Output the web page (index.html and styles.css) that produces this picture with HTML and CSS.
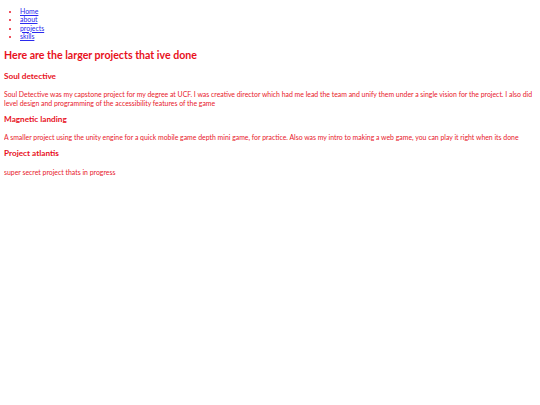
FILE: index.html
```html
<!DOCTYPE html>
<html>
<head>
<meta charset="utf-8">
<link rel="stylesheet" href="styles.css">
</head>
<body>
<ul class="nav">
  <li><a href="#">Home</a></li>
  <li><a href="#">about</a></li>
  <li><a href="#">projects</a></li>
  <li><a href="#">skills</a></li>
</ul>
<h2 class="title">Here are the larger projects that ive done</h2>
<h3 class="project">Soul detective</h3>
<p class="desc">Soul Detective was my capstone project for my degree at UCF. I was creative director which had me lead the team and unify them under a single vision for the project. I also did level design and programming of the accessibility features of the game</p>
<h3 class="project">Magnetic landing</h3>
<p class="desc">A smaller project using the unity engine for a quick mobile game depth mini game, for practice. Also was my intro to making a web game, you can play it right when its done</p>
<h3 class="project">Project atlantis</h3>
<p class="desc">super secret project thats in progress</p>
</body>
</html>
```
FILE: styles.css
```css
html {
  background: #fff;
}
body {
  margin: 4px;
  font-family: Lato, "Noto Sans", sans-serif;
  font-size: 6.9px;
  line-height: 1.2;
  color: #e8182a;
}
.nav {
  margin: 3px 0 7px;
  padding-left: 16px;
}
.nav a {
  color: #2a2aee;
}
.title {
  font-size: 10.6px;
  font-weight: 700;
  margin: 8.7px 0 10.7px;
  color: #e8101c;
}
.project {
  font-size: 8.2px;
  font-weight: 700;
  color: #e8101c;
}
.desc {
  font-weight: 400;
}
```
